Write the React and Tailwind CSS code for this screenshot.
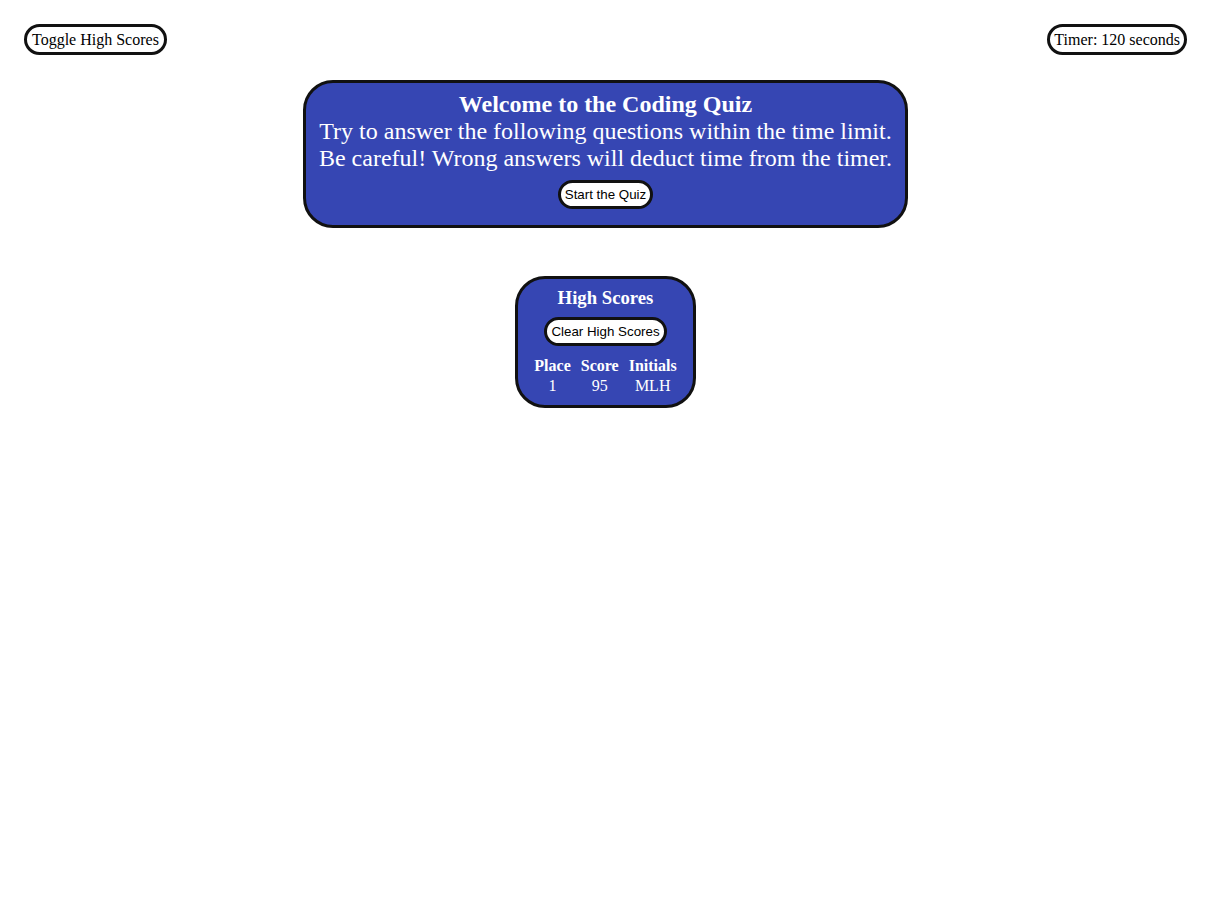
const serif = "font-['Liberation_Serif',serif]";
const sans = "font-['Liberation_Sans',Arial,sans-serif]";

const PillButton = ({ children }) => (
  <button
    className={`${sans} text-[13.33px] leading-[15px] text-black bg-white border-[3px] border-[#111] rounded-full px-[4px] py-[4px]`}
  >
    {children}
  </button>
);

const App = () => {
  const scores = [{ place: 1, score: 95, initials: "MLH" }];

  return (
    <div className={`${serif} min-h-screen bg-white text-black`}>
      {/* top bar */}
      <div className="flex justify-between items-start px-[24px] pt-[24px]">
        <button className="text-[16px] leading-[19px] bg-white border-[3px] border-[#111] rounded-full px-[5px] py-[3px]">
          Toggle High Scores
        </button>
        <div className="text-[16px] leading-[19px] bg-white border-[3px] border-[#111] rounded-full px-[4px] py-[3px]">
          Timer: 120 seconds
        </div>
      </div>

      {/* intro card */}
      <div className="w-1/2 mx-auto mt-[25px] bg-[#3646b3] border-[3px] border-[#111] rounded-[30px] text-white text-center pt-[8px] pb-[16px]">
        <p className="text-[24px] leading-[27px]">
          <strong>Welcome to the Coding Quiz</strong>
          <br />
          Try to answer the following questions within the time limit.
          <br />
          Be careful! Wrong answers will deduct time from the timer.
        </p>
        <div className="mt-[8px]">
          <PillButton>Start the Quiz</PillButton>
        </div>
      </div>

      {/* high scores */}
      <div className="flex justify-center mt-[48px]">
        <div className="bg-[#3646b3] border-[3px] border-[#111] rounded-[30px] text-white text-center px-[10px] pt-[8px] pb-[9px]">
          <h3 className="text-[18.72px] leading-[22px] font-bold">High Scores</h3>
          <div className="mt-[8px]">
            <PillButton>Clear High Scores</PillButton>
          </div>
          <table className="mt-[10px] border-separate border-spacing-x-[2px] border-spacing-y-0 text-[16px] leading-[20px]">
            <thead>
              <tr>
                <th className="px-[4px]">Place</th>
                <th className="px-[4px]">Score</th>
                <th className="px-[4px]">Initials</th>
              </tr>
            </thead>
            <tbody>
              {scores.map((s) => (
                <tr key={s.place}>
                  <td className="px-[4px]">{s.place}</td>
                  <td className="px-[4px]">{s.score}</td>
                  <td className="px-[4px]">{s.initials}</td>
                </tr>
              ))}
            </tbody>
          </table>
        </div>
      </div>
    </div>
  );
};

export default App;
